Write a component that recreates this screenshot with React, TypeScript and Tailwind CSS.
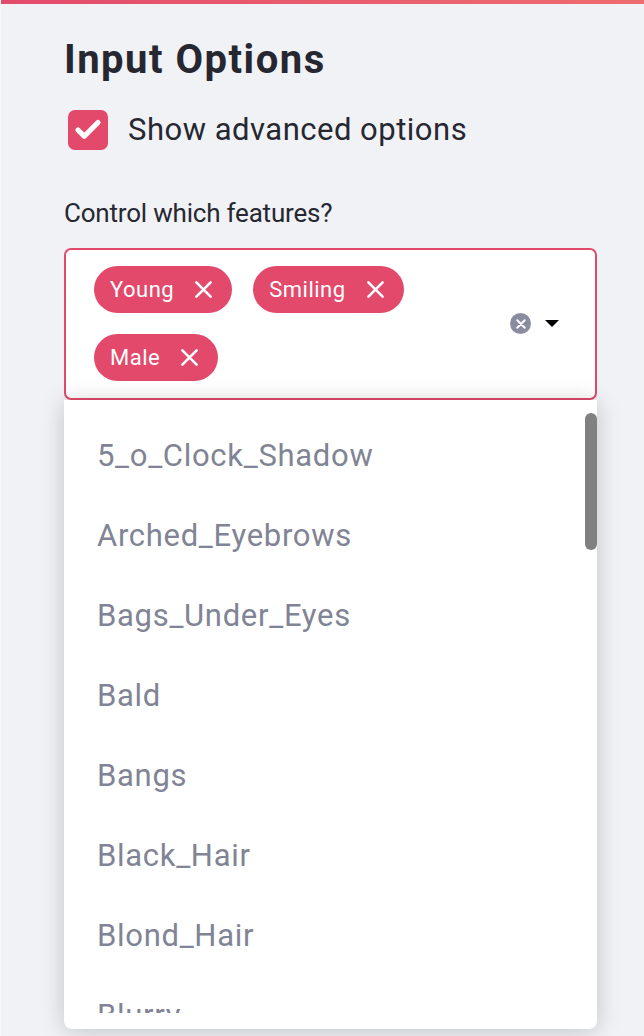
import { Check } from "lucide-react"

const selected = ["Young", "Smiling", "Male"]

const options = [
  "5_o_Clock_Shadow",
  "Arched_Eyebrows",
  "Bags_Under_Eyes",
  "Bald",
  "Bangs",
  "Black_Hair",
  "Blond_Hair",
  "Blurry",
]

function Cross({ size, stroke }: { size: number; stroke: number }) {
  return (
    <svg width={size} height={size} viewBox="0 0 16 16" fill="none" stroke="currentColor" strokeWidth={stroke} strokeLinecap="round">
      <path d="M2 2 L14 14 M14 2 L2 14" />
    </svg>
  )
}

function Tag({ label }: { label: string }) {
  return (
    <div className="flex items-center h-[47px] pl-[16px] pr-[19px] rounded-full bg-[#e2496b] text-white text-[22px] tracking-[0.5px] gap-[20px]">
      <span>{label}</span>
      <Cross size={19} stroke={2.2} />
    </div>
  )
}

export default function App() {
  return (
    <div
      className="min-h-[1036px] bg-[#f0f2f6] border-l border-[#f8f9fb] text-[#262730]"
      style={{ fontFamily: "Roboto, 'Noto Sans', sans-serif" }}
    >
      {/* decoration bar */}
      <div className="h-[4px] bg-gradient-to-r from-[#e34a6b] to-[#ee6d70]" />

      <div className="pl-[63px] w-[596px]">
        <div className="mt-[34px] h-[44px] flex items-center text-[40px] font-bold tracking-[1.5px]">
          Input Options
        </div>

        <div className="mt-[28px] h-[40px] flex items-center gap-[20px]">
          <div className="w-[40px] h-[40px] ml-[4px] rounded-[7px] bg-[#e2496b] flex items-center justify-center">
            <Check size={30} strokeWidth={4.2} className="text-white" />
          </div>
          <span className="text-[31px] tracking-[0.5px]">Show advanced options</span>
        </div>

        <div className="mt-[48px] h-[30px] flex items-center text-[26px] tracking-[-0.2px]">Control which features?</div>

        {/* multiselect */}
        <div className="relative mt-[20px]">
          <div className="h-[152px] rounded-[7px] border-2 border-[#e2496b] bg-white flex items-start pl-[28px] pr-[36px] pt-[16px]">
            <div className="flex flex-wrap gap-[21px] w-[340px]">
              {selected.map((s) => (
                <Tag key={s} label={s} />
              ))}
            </div>
            <div className="ml-auto mt-[47px] flex items-center gap-[14px]">
              <div className="w-[21px] h-[21px] rounded-full bg-[#8a8d9f] flex items-center justify-center text-white">
                <Cross size={10} stroke={3} />
              </div>
              <svg width="14" height="7" viewBox="0 0 14 7">
                <path d="M0 0 L14 0 L7 7 Z" fill="#000" />
              </svg>
            </div>
          </div>

          {/* dropdown menu */}
          <div className="relative z-10 h-[629px] bg-white rounded-b-[8px] py-[16px] shadow-[0_2px_24px_rgba(0,0,0,0.2)]">
            <div className="h-[597px] overflow-hidden">
              {options.map((o) => (
                <div key={o} className="h-[80px] flex items-center pl-[33px] text-[31px] tracking-[0.7px] text-[#808495]">
                  {o}
                </div>
              ))}
            </div>
            <div className="absolute right-0 top-[13px] w-[12px] h-[137px] rounded-full bg-[#808080]" />
          </div>
        </div>
      </div>
    </div>
  )
}
